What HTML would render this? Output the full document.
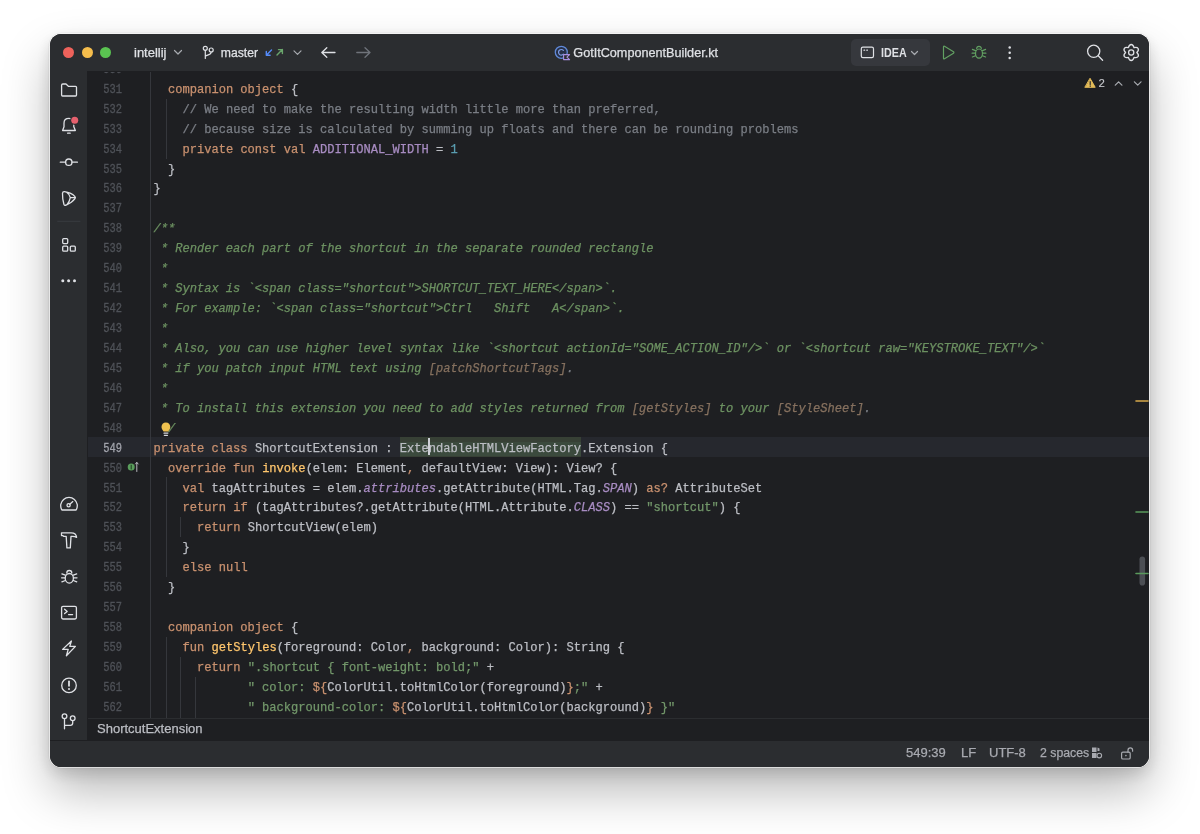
<!DOCTYPE html>
<html><head><meta charset="utf-8">
<style>
html,body{margin:0;padding:0;}
body{will-change:transform;width:1200px;height:834px;background:#ffffff;overflow:hidden;position:relative;font-family:"Liberation Sans",sans-serif;}
.win{position:absolute;left:50px;top:34px;width:1099px;height:733px;border-radius:11.5px;background:#1e1f22;overflow:hidden;
 box-shadow:0 0 0 1px rgba(255,255,255,0.6),0 0 0 1.6px rgba(0,0,0,0.06),0 24px 48px rgba(0,0,0,0.28),0 6px 16px rgba(0,0,0,0.14);}
.a{position:absolute;}
.title{position:absolute;left:0;top:0;width:1100px;height:37px;background:#2b2d30;}
.strip{position:absolute;left:0;top:37px;width:37px;height:669px;background:#2b2d30;}
.status{position:absolute;left:0;top:706px;width:1100px;height:27px;background:#2b2d30;border-top:1px solid #1e1f22;}
.ui{position:absolute;font-size:13px;color:#dfe1e5;white-space:pre;line-height:16px;-webkit-text-stroke:0.25px currentColor;}
.cl{position:absolute;left:153.40px;height:20px;line-height:20px;font-family:"Liberation Mono",monospace;font-size:12.080px;letter-spacing:0.000px;white-space:pre;color:#bcbec4;-webkit-text-stroke:0.25px currentColor;}
.ln{position:absolute;left:70px;width:52px;transform:scaleX(0.86);transform-origin:52px 0;height:20px;line-height:20px;font-family:"Liberation Mono",monospace;font-size:12.080px;letter-spacing:0.000px;color:#4f5258;text-align:right;-webkit-text-stroke:0.3px currentColor;white-space:pre;}
.ln.cur{color:#a1a3ab;}
.k{color:#c9916f}.c{color:#7a7e85}.d{color:#6c9161;font-style:italic}.s{color:#72976a}.n{color:#5a9db0}.p{color:#a88cc2}.pi{color:#a88cc2;font-style:italic}.f{color:#ffc66d}.r{color:#85705e;font-style:italic}.dd{color:#7a7e85;font-style:italic}
.se{background:#3b4a3d;}
.guide{position:absolute;width:1px;background:#35373c;}
svg{position:absolute;overflow:visible;}

</style></head><body>
<div class="win">
  <div class="title"></div>
  <div class="strip"></div>
  <div class="status"></div>
</div>
<!-- editor bits -->
<div class="a" style="left:88px;top:437px;width:1061px;height:20px;background:#26282e"></div>
<div class="a" style="left:400px;top:437px;width:181px;height:20px;background:#374035"></div>
<div class="guide" style="left:150px;top:72px;height:646px"></div>
<div class="guide" style="left:165.5px;top:99px;height:60px"></div>
<div class="guide" style="left:165.5px;top:477px;height:100px"></div>
<div class="guide" style="left:180px;top:517px;height:20px"></div>
<div class="guide" style="left:165.5px;top:637px;height:81px"></div>
<div class="guide" style="left:180px;top:657px;height:61px"></div>
<div class="guide" style="left:194.5px;top:677px;height:41px"></div>
<div class="a" style="left:88px;top:718px;width:1061px;height:1px;background:#2b2d30"></div>
<div class="a" style="left:0;top:0;width:1200px;height:834px;overflow:hidden;clip-path:inset(72px 0 116px 0)">
<div class="ln" style="top:59.81px">530</div>
<div class="ln" style="top:79.75px">531</div>
<div class="ln" style="top:99.69px">532</div>
<div class="ln" style="top:119.63px">533</div>
<div class="ln" style="top:139.57px">534</div>
<div class="ln" style="top:159.51px">535</div>
<div class="ln" style="top:179.45px">536</div>
<div class="ln" style="top:199.39px">537</div>
<div class="ln" style="top:219.33px">538</div>
<div class="ln" style="top:239.27px">539</div>
<div class="ln" style="top:259.21px">540</div>
<div class="ln" style="top:279.15px">541</div>
<div class="ln" style="top:299.09px">542</div>
<div class="ln" style="top:319.03px">543</div>
<div class="ln" style="top:338.97px">544</div>
<div class="ln" style="top:358.91px">545</div>
<div class="ln" style="top:378.85px">546</div>
<div class="ln" style="top:398.79px">547</div>
<div class="ln" style="top:418.73px">548</div>
<div class="ln cur" style="top:438.67px">549</div>
<div class="ln" style="top:458.61px">550</div>
<div class="ln" style="top:478.55px">551</div>
<div class="ln" style="top:498.49px">552</div>
<div class="ln" style="top:518.43px">553</div>
<div class="ln" style="top:538.37px">554</div>
<div class="ln" style="top:558.31px">555</div>
<div class="ln" style="top:578.25px">556</div>
<div class="ln" style="top:598.19px">557</div>
<div class="ln" style="top:618.13px">558</div>
<div class="ln" style="top:638.07px">559</div>
<div class="ln" style="top:658.01px">560</div>
<div class="ln" style="top:677.95px">561</div>
<div class="ln" style="top:697.89px">562</div>
<div class="cl" style="top:59.81px"></div>
<div class="cl" style="top:79.75px">  <span class="k">companion object</span> {</div>
<div class="cl" style="top:99.69px">    <span class="c">// We need to make the resulting width little more than preferred,</span></div>
<div class="cl" style="top:119.63px">    <span class="c">// because size is calculated by summing up floats and there can be rounding problems</span></div>
<div class="cl" style="top:139.57px">    <span class="k">private const val </span><span class="p">ADDITIONAL_WIDTH</span> = <span class="n">1</span></div>
<div class="cl" style="top:159.51px">  }</div>
<div class="cl" style="top:179.45px">}</div>
<div class="cl" style="top:199.39px"></div>
<div class="cl" style="top:219.33px"><span class="d">/**</span></div>
<div class="cl" style="top:239.27px"><span class="d"> * Render each part of the shortcut in the separate rounded rectangle</span></div>
<div class="cl" style="top:259.21px"><span class="d"> *</span></div>
<div class="cl" style="top:279.15px"><span class="d"> * Syntax is `&lt;span class="shortcut"&gt;SHORTCUT_TEXT_HERE&lt;/span&gt;`.</span></div>
<div class="cl" style="top:299.09px"><span class="d"> * For example: `&lt;span class="shortcut"&gt;Ctrl   Shift   A&lt;/span&gt;`.</span></div>
<div class="cl" style="top:319.03px"><span class="d"> *</span></div>
<div class="cl" style="top:338.97px"><span class="d"> * Also, you can use higher level syntax like `&lt;shortcut actionId="SOME_ACTION_ID"/&gt;` or `&lt;shortcut raw="KEYSTROKE_TEXT"/&gt;`</span></div>
<div class="cl" style="top:358.91px"><span class="d"> * if you patch input HTML text using </span><span class="r">[patchShortcutTags]</span><span class="dd">.</span></div>
<div class="cl" style="top:378.85px"><span class="d"> *</span></div>
<div class="cl" style="top:398.79px"><span class="d"> * To install this extension you need to add styles returned from </span><span class="r">[getStyles]</span><span class="d"> to your </span><span class="r">[StyleSheet]</span><span class="dd">.</span></div>
<div class="cl" style="top:418.73px"><span class="d"> */</span></div>
<div class="cl" style="top:438.67px"><span class="k">private class </span>ShortcutExtension : <span class="se">ExtendableHTMLViewFactory</span>.Extension {</div>
<div class="cl" style="top:458.61px">  <span class="k">override fun </span><span class="f">invoke</span>(elem: Element<span class="k">,</span> defaultView: View): View? {</div>
<div class="cl" style="top:478.55px">    <span class="k">val </span>tagAttributes = elem.<span class="pi">attributes</span>.getAttribute(HTML.Tag.<span class="pi">SPAN</span>) <span class="k">as?</span> AttributeSet</div>
<div class="cl" style="top:498.49px">    <span class="k">return if </span>(tagAttributes?.getAttribute(HTML.Attribute.<span class="pi">CLASS</span>) == <span class="s">"shortcut"</span>) {</div>
<div class="cl" style="top:518.43px">      <span class="k">return </span>ShortcutView(elem)</div>
<div class="cl" style="top:538.37px">    }</div>
<div class="cl" style="top:558.31px">    <span class="k">else null</span></div>
<div class="cl" style="top:578.25px">  }</div>
<div class="cl" style="top:598.19px"></div>
<div class="cl" style="top:618.13px">  <span class="k">companion object</span> {</div>
<div class="cl" style="top:638.07px">    <span class="k">fun </span><span class="f">getStyles</span>(foreground: Color<span class="k">,</span> background: Color): String {</div>
<div class="cl" style="top:658.01px">      <span class="k">return </span><span class="s">".shortcut { font-weight: bold;"</span> +</div>
<div class="cl" style="top:677.95px">             <span class="s">" color: </span><span class="k">${</span>ColorUtil.toHtmlColor(foreground)<span class="k">}</span><span class="s">;"</span> +</div>
<div class="cl" style="top:697.89px">             <span class="s">" background-color: </span><span class="k">${</span>ColorUtil.toHtmlColor(background)<span class="k">}</span><span class="s"> }"</span></div>
</div>
<div class="a" style="left:428px;top:438px;width:2px;height:17px;background:#ced0d6"></div>
<!-- title bar -->
<div class="a" style="left:63.3px;top:47.1px;width:11px;height:11px;border-radius:50%;background:#ee625b"></div>
<div class="a" style="left:81.5px;top:47.1px;width:11px;height:11px;border-radius:50%;background:#f5bd4c"></div>
<div class="a" style="left:99.8px;top:47.1px;width:11px;height:11px;border-radius:50%;background:#5ac351"></div>
<div class="ui" style="left:134px;top:45.2px">intellij</div>
<div class="ui" style="left:220.8px;top:45.2px;font-size:12.2px">master</div>
<div class="ui" style="left:573.3px;top:45.2px;font-size:12.65px">GotItComponentBuilder.kt</div>
<div class="a" style="left:851px;top:39px;width:79px;height:27px;border-radius:5px;background:#36383d"></div>
<div class="ui" style="left:881px;top:45.2px;font-size:12.2px;font-weight:bold;-webkit-text-stroke:0;transform:scaleX(0.88);transform-origin:0 0">IDEA</div>
<!-- status -->
<div class="ui" style="left:97px;top:721px;color:#bcbec4">ShortcutExtension</div>
<div class="ui" style="left:906px;top:745px;color:#a8aab0">549:39</div>
<div class="ui" style="left:961px;top:745px;color:#a8aab0">LF</div>
<div class="ui" style="left:989px;top:745px;color:#a8aab0">UTF-8</div>
<div class="ui" style="left:1040px;top:745px;color:#a8aab0;font-size:12.3px">2 spaces</div>
<div class="ui" style="left:1098.6px;top:74.7px;font-size:11.4px;color:#c9cbd0;-webkit-text-stroke:0.1px #c9cbd0">2</div>

<svg width="1200" height="834" viewBox="0 0 1200 834" style="left:0;top:0" fill="none" stroke-linecap="round" stroke-linejoin="round">
<!-- title bar -->
<polyline points="174.5,50.5 178,54 181.5,50.5" stroke="#a8abb0" stroke-width="1.2"/>
<g stroke="#dfe1e5" stroke-width="1.2">
 <circle cx="205.3" cy="48.3" r="2"/>
 <circle cx="211.2" cy="50" r="2"/>
 <path d="M205.3 50.3 V58.5 M211.2 52 C211.2 55 207.5 54.8 205.3 56.2"/>
</g>
<g stroke="#548af7" stroke-width="1.4"><path d="M271.5 50 L266.3 55.2 M266.3 51.4 V55.2 H270.1"/></g>
<g stroke="#6aa56c" stroke-width="1.4"><path d="M277 55 L282.4 49.6 M278.5 49.6 H282.4 V53.5"/></g>
<polyline points="294,50.8 297.5,54.3 301,50.8" stroke="#a8abb0" stroke-width="1.2"/>
<g stroke="#dfe1e5" stroke-width="1.3"><path d="M335 52.5 H321.8 M326.8 47.7 L321.8 52.5 L326.8 57.3"/></g>
<g stroke="#6f737a" stroke-width="1.3"><path d="M356.8 52.5 H370 M365 47.7 L370 52.5 L365 57.3"/></g>
<!-- kotlin file icon -->
<circle cx="561.3" cy="52.3" r="6" fill="#263049" stroke="#6089d8" stroke-width="1.3"/>
<path d="M563.4 50.4 A2.8 2.8 0 1 0 563.4 54.2" stroke="#7d9be0" stroke-width="1.2"/>
<path d="M563.6 54.6 H569.6 L566.9 57.1 L569.6 59.6 H563.6 Z" fill="#2b2d30" stroke="#a88fe0" stroke-width="1.1"/>
<!-- run widget -->
<rect x="861.3" y="47.2" width="12.2" height="10.4" rx="1.6" stroke="#dfe1e5" stroke-width="1.2"/>
<path d="M864 50.2 H864.6 M866.8 50.2 H867.4" stroke="#dfe1e5" stroke-width="1.3"/>
<polyline points="911.5,51.5 914.5,54.5 917.5,51.5" stroke="#a8abb0" stroke-width="1.2"/>
<path d="M943.5 47 V58.2 Q943.5 59.3 944.5 58.7 L953.5 53.2 Q954.3 52.5 953.5 51.8 L944.5 46.3 Q943.5 45.8 943.5 47 Z" stroke="#62a062" stroke-width="1.2"/>
<g stroke="#62a062" stroke-width="1.2">
 <path d="M976.7 48.6 A2.3 2.3 0 0 1 981.3 48.6"/>
 <ellipse cx="979" cy="53.6" rx="3.5" ry="4.6"/>
 <path d="M972.4 49.4 L975.5 50.6 M972.1 53.2 H975.4 M972.4 57 L975.5 55.8 M985.6 49.4 L982.5 50.6 M985.9 53.2 H982.6 M985.6 57 L982.5 55.8"/>
</g>
<g fill="#dfe1e5" stroke="none"><circle cx="1009.7" cy="47.4" r="1.25"/><circle cx="1009.7" cy="52.7" r="1.25"/><circle cx="1009.7" cy="57.9" r="1.25"/></g>
<g stroke="#dfe1e5" stroke-width="1.3"><circle cx="1093.7" cy="51.3" r="6.1"/><path d="M1098.2 55.8 L1102.6 60.2"/></g>
<g stroke="#dfe1e5" stroke-width="1.3">
 <path d="M1128.40 47.65 C1128.68 46.55 1129.20 44.50 1131.20 44.50 C1133.20 44.50 1133.72 46.55 1134.00 47.65 C1135.09 47.34 1137.13 46.77 1138.13 48.50 C1139.13 50.23 1137.61 51.71 1136.80 52.50 C1137.61 53.29 1139.13 54.77 1138.13 56.50 C1137.13 58.23 1135.09 57.66 1134.00 57.35 C1133.72 58.45 1133.20 60.50 1131.20 60.50 C1129.20 60.50 1128.68 58.45 1128.40 57.35 C1127.31 57.66 1125.27 58.23 1124.27 56.50 C1123.27 54.77 1124.79 53.29 1125.60 52.50 C1124.79 51.71 1123.27 50.23 1124.27 48.50 C1125.27 46.77 1127.31 47.34 1128.40 47.65 Z"/>
 <circle cx="1131.2" cy="52.5" r="2.6"/>
</g>
<!-- editor top-right -->
<path d="M1090.2 78.6 L1095.2 87.3 H1085.2 Z" fill="#e3bb58" stroke="#e3bb58" stroke-width="1" stroke-linejoin="round"/>
<path d="M1090.2 81.6 V84.4 M1090.2 85.9 V86.3" stroke="#2b2d30" stroke-width="1.2"/>
<polyline points="1115.3,85.2 1118.6,81.8 1121.9,85.2" stroke="#a8abb0" stroke-width="1.2"/>
<polyline points="1134.4,81.8 1137.7,85.2 1141,81.8" stroke="#a8abb0" stroke-width="1.2"/>
<!-- tool strip -->
<g stroke="#dfe1e5" stroke-width="1.3">
 <path d="M61.6 85.2 Q61.6 84 62.8 84 H66 L68.6 86.4 H75.6 Q76.5 86.4 76.5 87.3 V95 Q76.5 96 75.6 96 H62.5 Q61.6 96 61.6 95 Z"/>
 <path d="M62.6 130.5 L64 126.8 V123.2 C64 120.2 66.2 118.4 69 118.4 C69.8 118.4 70.5 118.5 71.1 118.8 M73.8 124.3 V126.8 L75.4 130.5 H62.6 M67.6 133.2 H70.2"/>
 <path d="M60.3 162.2 H65.6 M72 162.2 H77.4"/>
 <circle cx="68.8" cy="162.2" r="3.2"/>
 <path d="M64.4 191.7 Q62.6 191.6 62.5 193.4 Q62.4 199 63.9 204.2 Q64.5 205.7 66 205.1 Q72 202.6 75 198.6 Q75.8 197.6 75 196.7 Q71.6 192.7 64.4 191.7 Z M66.6 192.2 Q69.6 194.2 70.3 197.6 M70.3 197.6 H75.2 M70.3 197.6 Q69.6 201.4 67 204.7"/>
 <rect x="62.7" y="238.6" width="5" height="5" rx="1"/>
 <rect x="62.7" y="246.2" width="5" height="5" rx="1"/>
 <rect x="70.3" y="246.2" width="5" height="5" rx="1"/>
</g>
<circle cx="74.7" cy="120.3" r="4.6" fill="#2b2d30" stroke="none"/><circle cx="74.7" cy="120.3" r="3.5" fill="#e5606d" stroke="none"/>
<path d="M57.7 221.3 H80" stroke="#393b40" stroke-width="1"/>
<g fill="#dfe1e5" stroke="none"><circle cx="62.8" cy="280.7" r="1.5"/><circle cx="68.6" cy="280.7" r="1.5"/><circle cx="74.5" cy="280.7" r="1.5"/></g>
<g stroke="#dfe1e5" stroke-width="1.3">
 <path d="M61.9 510 A8.3 8.3 0 1 1 76.1 510 Z M69.8 504.2 L72.8 501.6"/>
 <circle cx="68.6" cy="505.3" r="1.6"/>
 <path d="M61.5 532.8 H71.2 C74.2 532.8 76.4 534.8 76.6 537.4 C75.2 536.4 73.6 536.2 71 536.4 L70.3 547.9 H66.9 L66.2 536.4 H63.8 L62.8 535.6 H61.5 Z"/>
 <path d="M66.8 573 A2.5 2.5 0 0 1 71.8 573"/>
 <ellipse cx="69.3" cy="578.3" rx="4.1" ry="4.8"/>
 <path d="M61.9 573.9 L65.3 575.2 M61.6 577.8 H65 M61.9 581.8 L65.3 580.5 M76.7 573.9 L73.3 575.2 M77 577.8 H73.6 M76.7 581.8 L73.3 580.5"/>
 <rect x="61.6" y="606.4" width="14.8" height="12.6" rx="1.4"/>
 <path d="M64.6 609.2 L67.2 611.4 L64.6 613.6 M68.6 614.6 H72.6"/>
 <path d="M71.4 641 L62.6 649.4 H68.2 L66.4 655.8 L75.4 646.4 H69.8 Z"/>
 <circle cx="69" cy="685.4" r="7.3"/>
 <path d="M69 681.3 V685.8" stroke-width="1.8"/>
 <path d="M64.5 718.7 V728.8 M72.7 720.7 V723 Q72.7 725.4 70.3 725.4 H64.5"/>
 <circle cx="64.5" cy="716.3" r="2.35"/>
 <circle cx="72.7" cy="718.3" r="2.35"/>
</g>
<circle cx="69" cy="689" r="1" fill="#dfe1e5" stroke="none"/>
<!-- gutter override icon -->
<circle cx="131.2" cy="467" r="3.5" fill="#5a9e5c" stroke="none"/>
<path d="M131.2 465.2 V469" stroke="#1e3a20" stroke-width="1"/>
<path d="M136.8 471.5 V462.5 M135.4 464 L136.8 462.5 L138.2 464" stroke="#c9cbd0" stroke-width="0.9"/>
<!-- lightbulb -->
<path d="M165.9 422.6 C168.6 422.6 170.3 424.6 170.3 427 C170.3 429 169 430.2 168.2 431.4 H163.6 C162.8 430.2 161.5 429 161.5 427 C161.5 424.6 163.2 422.6 165.9 422.6 Z" fill="#efc14f" stroke="none"/>
<path d="M164 433.2 H167.8 M164.3 435.3 H167.5" stroke="#d5d7dc" stroke-width="1.2"/>
<!-- status bar icons -->
<g stroke="#a8aab0" stroke-width="1.2">
 <rect x="1121.6" y="752.2" width="8.6" height="6.8" rx="1.3"/>
 <path d="M1128 752.2 V750.2 A2.3 2.3 0 0 1 1132.6 750.2 V751.2"/>
</g>
<circle cx="1125.9" cy="755.6" r="0.8" fill="#a8aab0" stroke="none"/>
<g fill="#a8aab0" stroke="none"><path d="M1092 747.5 H1096.5 V752 H1092 Z M1092 753 H1096.5 V758 H1092 Z M1097.5 747.5 L1099.5 748.5 V751 H1097.5 Z"/></g>
<circle cx="1099.3" cy="755.6" r="2.3" stroke="#a8aab0" stroke-width="1.1"/>
<!-- scrollbar markers -->
<rect x="1139.5" y="556.5" width="5.6" height="29" rx="2.8" fill="#4c4f54" stroke="none"/>
<path d="M1136 401 H1148" stroke="#d6a94b" stroke-width="1.6"/>
<path d="M1136 512 H1148" stroke="#5a9a5c" stroke-width="1.6"/>
<path d="M1136 573.5 H1148" stroke="#5a9a5c" stroke-width="1.6"/>
</svg>


</body></html>
